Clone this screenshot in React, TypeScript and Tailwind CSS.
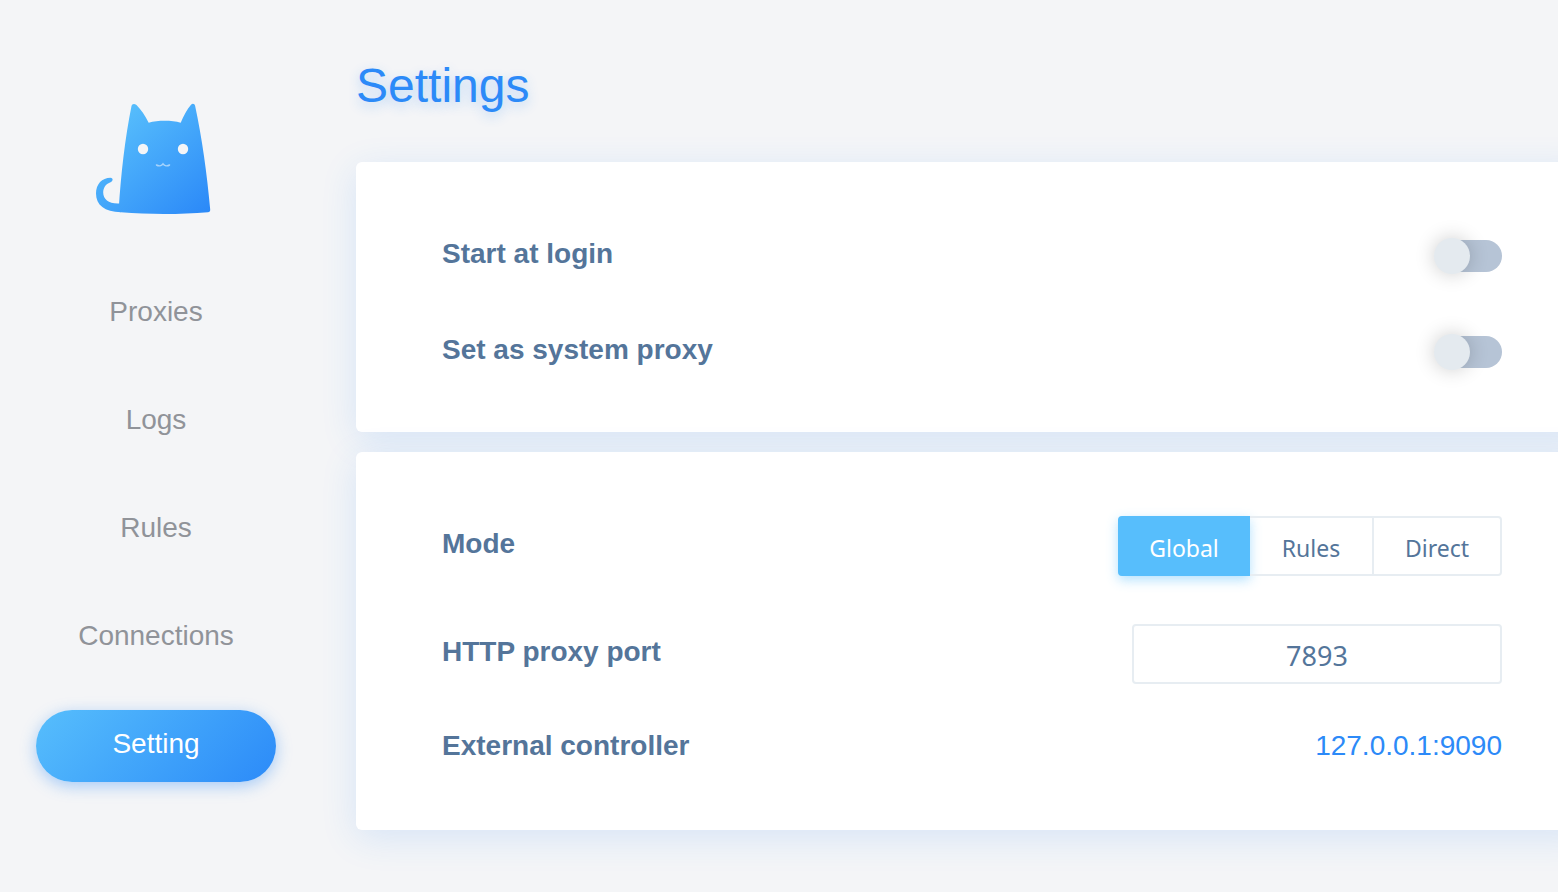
// ─── Settings Page ──────────────────────────────────────
import { useState } from 'react'
import type { ReactNode } from 'react'
import clsx from 'clsx'

const NAV_ITEMS = ['Proxies', 'Logs', 'Rules', 'Connections', 'Setting']

const MODES = [
  { name: 'Global', width: 'w-33' },
  { name: 'Rules', width: 'w-31' },
  { name: 'Direct', width: 'w-32' },
]

function CatLogo() {
  return (
    <svg viewBox="0 0 120 120" className="size-30" role="img" aria-label="Logo">
      <defs>
        <linearGradient id="cat" gradientUnits="userSpaceOnUse" x1="22" y1="14" x2="108" y2="112">
          <stop offset="0" stopColor="#57befc" />
          <stop offset="1" stopColor="#2c8af8" />
        </linearGradient>
      </defs>
      <path
        d="M14.500 77.700C6 77.700 0 84 0 93.500C0 105 8.500 112 25 112.200L23.500 103.400C13 104 7.200 99.500 7.200 92.500C7.200 87.500 9.800 84 14 82.400C17.300 81.400 17.500 77.800 14.500 77.700Z"
        fill="url(#cat)"
      />
      <path
        d="M35.500 6C36 3.500 38.500 3.300 40.500 5C45 9.500 49 15.500 52.700 22.800C62 20.200 75.500 20.200 84.700 22.800C87.500 16 91 9.500 95 4.800C96.500 3 98.600 3.500 99.100 5.800C106 38 111 74 114.200 109.500C114.300 111.300 113.500 112 112 112.200C84 114.600 53 114.600 25 112.300C23.300 112.100 22.600 111.300 22.700 109.500C25 74 29 38 35.500 6Z"
        fill="url(#cat)"
      />
      <circle cx="47" cy="49" r="5.200" fill="#f4f5f7" />
      <circle cx="87" cy="49" r="5.200" fill="#f4f5f7" />
      <path
        d="M60.500 65C62.500 66.200 65.500 66 67 63.800C68.500 66 71.500 66.200 73.500 65"
        fill="none"
        stroke="#a5d3fc"
        strokeWidth="1.500"
        strokeLinecap="round"
      />
    </svg>
  )
}

function Card({ className, children }: { className: string; children: ReactNode }) {
  return (
    <section
      className={clsx(
        '-mr-8 rounded-md bg-white pl-[86px] pr-[88px] shadow-[0_8px_36px_rgba(44,138,248,0.14)]',
        className
      )}
    >
      {children}
    </section>
  )
}

function Row({ label, htmlFor, className, children }: {
  label: string
  htmlFor?: string
  className: string
  children: ReactNode
}) {
  const Tag = htmlFor ? 'label' : 'span'
  return (
    <div className={clsx('flex items-center justify-between', className)}>
      <Tag
        {...(htmlFor ? { htmlFor } : {})}
        className="pb-1 text-[28px] leading-9 font-bold text-[#54759a]"
      >
        {label}
      </Tag>
      {children}
    </div>
  )
}

function Switch({ id }: { id: string }) {
  return (
    <input
      id={id}
      type="checkbox"
      role="switch"
      className="relative h-8 w-16 cursor-pointer appearance-none rounded-full bg-[#b6c4d6] checked:bg-[#57befc] before:absolute before:-top-0.5 before:-left-1 before:size-9 before:rounded-full before:bg-[#e4eaef] before:shadow-[0_0_20px_rgba(0,0,0,0.2)] checked:before:left-8"
    />
  )
}

export default function App() {
  const [active, setActive] = useState('Setting')
  const [mode, setMode] = useState('Global')
  const [port, setPort] = useState('7893')

  return (
    <div className="flex min-h-screen overflow-hidden bg-[#f4f5f7] font-['Liberation_Sans',Arial,sans-serif]">
      {/* Sidebar */}
      <aside className="flex w-78 shrink-0 flex-col items-center px-9 pt-25">
        <CatLogo />
        <nav className="mt-[58px] flex w-full flex-col gap-9">
          {NAV_ITEMS.map((item) => (
            <a
              key={item}
              href={`#${item.toLowerCase()}`}
              onClick={() => setActive(item)}
              className={clsx(
                'flex h-18 items-center justify-center rounded-full pb-1 text-[28px] leading-9',
                item === active
                  ? 'bg-linear-135 from-[#57befc] to-[#2c8af8] text-white shadow-[0_4px_16px_rgba(44,138,248,0.4)]'
                  : 'text-[#909399]'
              )}
            >
              {item}
            </a>
          ))}
        </nav>
      </aside>

      {/* Content */}
      <main className="min-w-0 flex-1 pt-14 pb-15 pl-11">
        <h1 className="mb-[46px] text-5xl leading-15 text-[#2c8af8] [text-shadow:0_4px_12px_rgba(44,138,248,0.3)]">
          Settings
        </h1>

        <div className="flex flex-col gap-5">
          <Card className="pt-[46px] pb-8">
            <Row label="Start at login" htmlFor="start-at-login" className="h-24">
              <Switch id="start-at-login" />
            </Row>
            <Row label="Set as system proxy" htmlFor="system-proxy" className="h-24">
              <Switch id="system-proxy" />
            </Row>
          </Card>

          <Card className="pt-10 pb-[42px]">
            <Row label="Mode" className="h-27">
              <div
                role="group"
                aria-label="Mode"
                className="flex h-15 font-['Noto_Sans',sans-serif] text-[23px] leading-8"
              >
                {MODES.map(({ name, width }) => (
                  <button
                    key={name}
                    type="button"
                    aria-pressed={name === mode}
                    onClick={() => setMode(name)}
                    className={clsx(
                      'border-y-2 border-r-2 pt-1 first:rounded-l first:border-l-2 last:rounded-r',
                      width,
                      name === mode
                        ? 'border-[#57befc] bg-[#57befc] text-white shadow-[0_4px_12px_rgba(87,190,252,0.45)]'
                        : 'border-[#e7edf2] text-[#54759a]'
                    )}
                  >
                    {name}
                  </button>
                ))}
              </div>
            </Row>
            <Row label="HTTP proxy port" htmlFor="http-port" className="h-27">
              <input
                id="http-port"
                type="text"
                value={port}
                onChange={(e) => setPort(e.target.value)}
                className="h-15 w-[370px] rounded border-2 border-[#e7edf2] pt-0.5 text-center font-['Noto_Sans',sans-serif] text-[27px] text-[#54759a]"
              />
            </Row>
            <Row label="External controller" className="h-20">
              <a href="#controller" className="pb-1 text-[28px] leading-9 text-[#2c8af8]">
                127.0.0.1:9090
              </a>
            </Row>
          </Card>
        </div>
      </main>
    </div>
  )
}
